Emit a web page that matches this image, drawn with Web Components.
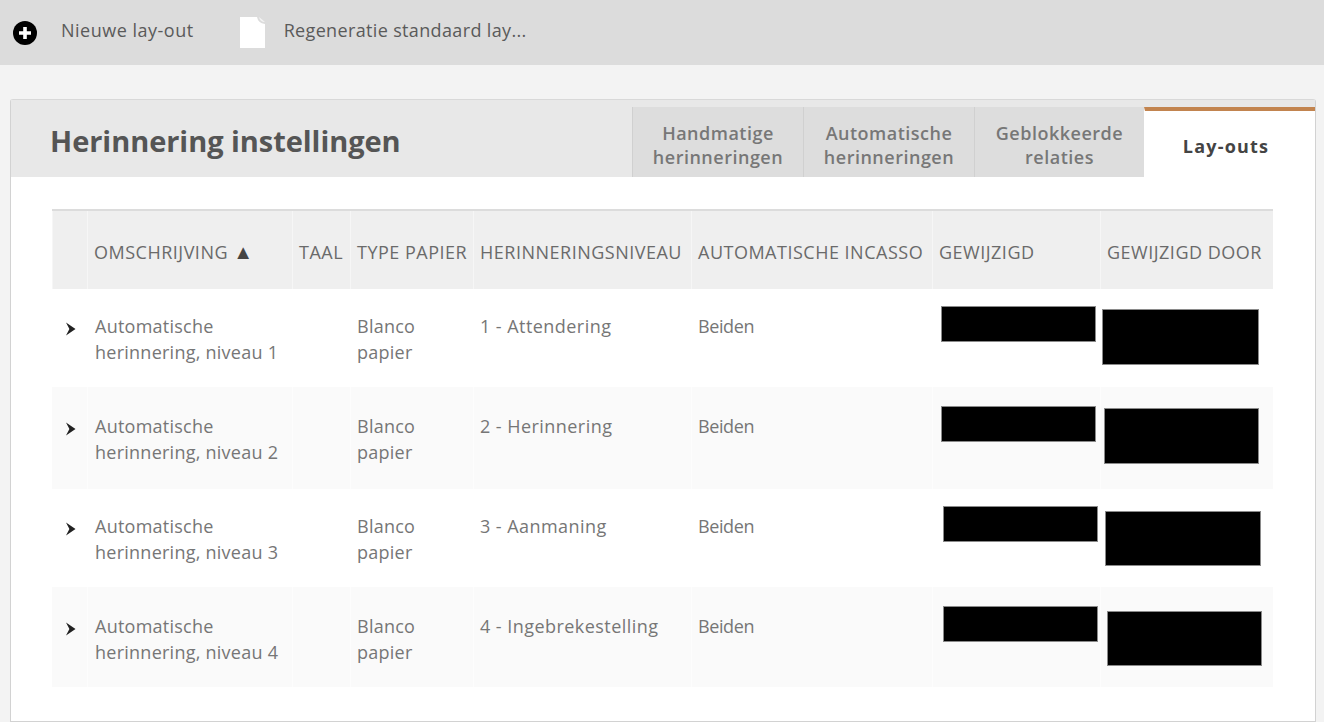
<!DOCTYPE html>
<html><head><meta charset="utf-8"><style>
html,body{margin:0;padding:0;height:722px;overflow:hidden;background:#f3f3f3;font-family:"Open Sans","Noto Sans",sans-serif;}
</style></head><body>
<app-toolbar>
  <tool-button label="Nieuwe lay-out" gap="24" ls=".5"><svg width="24" height="24" viewBox="0 0 24 24" style="margin-left:13px"><circle cx="12" cy="12" r="12" fill="#000"/><path d="M12 6v12M6 12h12" stroke="#fff" stroke-width="3.6" fill="none"/></svg></tool-button>
  <tool-button label="Regeneratie standaard lay..." gap="19" ls=".35"><svg width="25" height="31" viewBox="0 0 25 31" style="margin-left:46px"><path d="M0 0h17q1 6 8 7v24H0z" fill="#fff"/><path d="M19 0l6 5q-5 0-6-5z" fill="#f4f4f4"/></svg></tool-button>
</app-toolbar>
<settings-card heading="Herinnering instellingen">
  <tab-item slot="tabs" w="171">Handmatige<br>herinneringen</tab-item>
  <tab-item slot="tabs" w="171">Automatische<br>herinneringen</tab-item>
  <tab-item slot="tabs" w="170">Geblokkeerde<br>relaties</tab-item>
  <tab-item slot="tabs" w="171" active>Lay-outs</tab-item>
  <data-table>
    <table-head></table-head>
    <table-row h="98" n="Automatische herinnering, niveau 1" lvl="1 - Attendering" a="9,17,155,36" b="2,20,157,56"></table-row>
    <table-row h="102" alt n="Automatische herinnering, niveau 2" lvl="2 - Herinnering" a="9,19,155,36" b="4,21,155,56"></table-row>
    <table-row h="98" n="Automatische herinnering, niveau 3" lvl="3 - Aanmaning" a="11,17,155,36" b="5,22,156,55"></table-row>
    <table-row h="100" alt n="Automatische herinnering, niveau 4" lvl="4 - Ingebrekestelling" a="11,19,155,36" b="7,24,155,55"></table-row>
  </data-table>
</settings-card>
<script>
const COLS='35px 205px 58px 123px 218px 241px 168px 173px';
const base=`*{box-sizing:border-box}:host{box-sizing:border-box}`;
function def(name,render){customElements.define(name,class extends HTMLElement{connectedCallback(){if(this.shadowRoot)return;this.attachShadow({mode:'open'}).innerHTML=render(this)}})}
def('app-toolbar',()=>`<style>${base}:host{display:flex;align-items:center;height:65px;background:#dcdcdc}</style><slot></slot>`);
def('tool-button',e=>`<style>${base}:host{display:flex;align-items:center;font-size:18px;color:#5a5a5a;letter-spacing:${e.getAttribute('ls')}px;white-space:nowrap}span{margin-left:${e.getAttribute('gap')}px;position:relative;top:-3px}</style><slot></slot><span>${e.getAttribute('label')}</span>`);
def('settings-card',e=>`<style>${base}
:host{display:block;margin:34px 8px 0 10px;height:623px;background:#fff;border:1px solid #d2d2d2;border-top-color:#d8d8d8;border-radius:3px 3px 0 0}
header{display:flex;height:77px;background:#e8e8e8}
h1{flex:1;margin:0;padding:21px 0 0 39px;font-size:29px;font-weight:700;line-height:40px;color:#555;letter-spacing:-.05px}
.tabs{display:flex;align-items:stretch}
main{padding:32px 41px 0 41px}</style>
<header><h1>${e.getAttribute('heading')}</h1><div class="tabs"><slot name="tabs"></slot></div></header><main><slot></slot></main>`);
def('tab-item',e=>{const a=e.hasAttribute('active');return `<style>${base}
:host{display:flex;width:${e.getAttribute('w')}px;height:70px;margin-top:7px;align-items:center;justify-content:center;text-align:center;font-size:18px;font-weight:${a?700:600};line-height:24px;letter-spacing:${a?'1.2':'.5'}px;
background:${a?'#fff':'#dddddd'};color:${a?'#444':'#777'};border-left:1px solid ${a?'transparent':'#d0d0d0'};${a?'border-top:4px solid #c2844f;padding:3px 8px 0 0;':'padding-top:6px;'}}</style><slot></slot>`});
def('data-table',()=>`<style>${base}:host{display:block;width:1221px}</style><slot></slot>`);
def('table-head',()=>{const hs=['','OMSCHRIJVING <b>▲</b>','TAAL','TYPE PAPIER','HERINNERINGSNIVEAU','AUTOMATISCHE INCASSO','GEWIJZIGD','GEWIJZIGD DOOR'];
return `<style>${base}:host{display:grid;grid-template-columns:${COLS};height:80px;border-top:2px solid #dcdcdc;font-size:18px;color:#6a6a6a;letter-spacing:.5px}
div{background:#efefef;border-left:1px solid #f6f6f6;padding:30px 0 0 6px;line-height:22px;white-space:nowrap;display:block}div:first-child{border:0}
b{font-weight:400;font-size:20px;color:#444;line-height:20px}</style>${hs.map(h=>`<div>${h}</div>`).join('')}`});
def('table-row',e=>{const g=k=>e.getAttribute(k);const alt=e.hasAttribute('alt');const box=s=>{const [x,y,w,h]=s.split(',');return `<i style="margin-left:${x}px;margin-top:${y}px;width:${w}px;height:${h}px"></i>`};
return `<style>${base}:host{display:grid;grid-template-columns:${COLS};height:${g('h')}px;font-size:18px;line-height:26px;color:#767676;letter-spacing:.25px;background:${alt?'#fafafa':'#fff'}}
div{padding:${alt?26:24}px 0 0 7px;min-width:0;white-space:nowrap;${alt?'box-shadow:inset 1px 0 0 #fdfdfd;':''}}
.name{padding-left:8px}.lvl{letter-spacing:.45px}.bei{letter-spacing:-.4px}
.box{padding:0}
.c{padding:${alt?35:33}px 0 0 14px;box-shadow:none}
i{display:block;background:#000;box-shadow:0 0 0 1px #8a8a8a inset}
svg{display:block}</style>
<div class="c"><svg width="10" height="14" viewBox="0 0 10 14"><path d="M0 .5L9.5 7 0 13.5 3.4 7z" fill="#222"/></svg></div>
<div class="name">${g('n').replace('Automatische ','Automatische<br>')}</div><div></div><div>Blanco<br>papier</div><div class="lvl">${g('lvl')}</div><div class="bei">Beiden</div>
<div class="box">${box(g('a'))}</div><div class="box">${box(g('b'))}</div>`});
</script>
</body></html>
